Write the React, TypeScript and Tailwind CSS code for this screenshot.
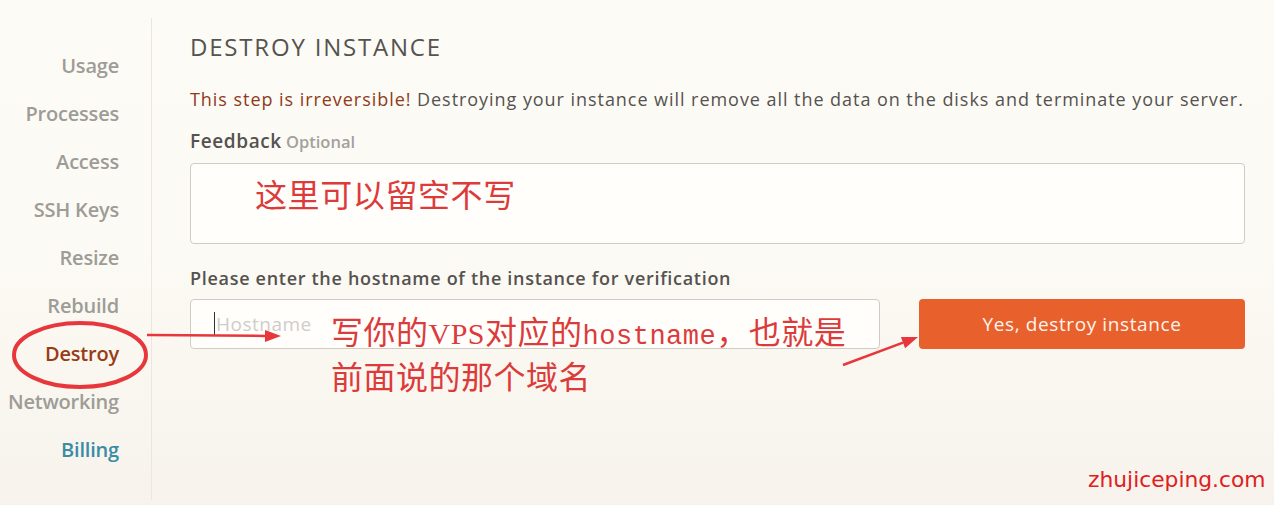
const nav = [
  { label: 'Usage', tone: 'text-[#9d9c97]' },
  { label: 'Processes', tone: 'text-[#9d9c97]' },
  { label: 'Access', tone: 'text-[#9d9c97]' },
  { label: 'SSH Keys', tone: 'text-[#9d9c97]' },
  { label: 'Resize', tone: 'text-[#9d9c97]' },
  { label: 'Rebuild', tone: 'text-[#9d9c97]' },
  { label: 'Destroy', tone: 'text-[#983c16]' },
  { label: 'Networking', tone: 'text-[#9d9c97]' },
  { label: 'Billing', tone: 'text-[#3a8ba6]' },
]

const sans = "font-['Open_Sans','Liberation_Sans',sans-serif]"
const note = "font-['Liberation_Serif','Noto_Sans_CJK_SC',serif] text-[#dc3b3b]"

function Arrow({ x1, y1, x2, y2 }: { x1: number; y1: number; x2: number; y2: number }) {
  const a = Math.atan2(y2 - y1, x2 - x1)
  const len = 16
  const w = 6
  const bx = x2 - Math.cos(a) * len
  const by = y2 - Math.sin(a) * len
  const px = -Math.sin(a) * w
  const py = Math.cos(a) * w
  return (
    <g fill="#e8373c" stroke="#e8373c">
      <line x1={x1} y1={y1} x2={bx} y2={by} strokeWidth={2.5} />
      <polygon points={`${x2},${y2} ${bx + px},${by + py} ${bx - px},${by - py}`} stroke="none" />
    </g>
  )
}

export default function App() {
  return (
    <div className={`relative h-[505px] w-[1274px] overflow-hidden bg-gradient-to-b from-[#fdfbf6] via-[#fcfaf4] to-[#f7f3ec] ${sans}`}>
      <div className="flex h-full">
        <aside className="mt-[18px] h-[482px] w-[152px] shrink-0 border-r border-[#ebe7df] pr-[32px] pt-[24px]">
          <ul className="flex flex-col items-end">
            {nav.map((item) => (
              <li key={item.label} className={`h-[48px] text-[20px] font-semibold leading-[48px] tracking-[-0.2px] ${item.tone}`}>
                {item.label}
              </li>
            ))}
          </ul>
        </aside>

        <main className="min-w-0 flex-1 pl-[38px] pr-[29px] pt-[33px]">
          <h1 className="text-[24px] font-normal uppercase leading-[28px] tracking-[1.8px] text-[#555350]">Destroy instance</h1>

          <p className="mt-[25px] whitespace-nowrap text-[18px] leading-[26px] tracking-[0.95px] text-[#55524f]">
            <span className="text-[#8e3a1b]">This step is irreversible!</span> Destroying your instance will remove all the data on the
            disks and terminate your server.
          </p>

          <div className="mt-[16px] leading-[26px]">
            <span className="text-[19px] font-semibold tracking-[0.6px] text-[#55524f]">Feedback</span>{' '}
            <span className="text-[16.5px] font-semibold text-[#a3a19c]">Optional</span>
          </div>

          <div className="mt-[8px] h-[81px] rounded-[4px] border border-[#cfccc5] bg-[#fffefb]" />

          <div className="mt-[21px] text-[18px] font-semibold leading-[26px] tracking-[0.7px] text-[#55524f]">
            Please enter the hostname of the instance for verification
          </div>

          <div className="mt-[8px] flex gap-[39px]">
            <div className="flex h-[50px] w-[690px] items-center rounded-[4px] border border-[#cfccc5] bg-[#fffefb] pl-[23px]">
              <span className="mr-[1px] h-[24px] w-px bg-[#333]" />
              <span className="text-[19px] tracking-[0.5px] text-[#cfcdca]">Hostname</span>
            </div>
            <button className="h-[50px] flex-1 rounded-[4px] bg-[#e8602c] text-[19px] tracking-[0.6px] text-[#fff4ec]">
              Yes, destroy instance
            </button>
          </div>
        </main>
      </div>

      {/* annotations */}
      <svg className="pointer-events-none absolute inset-0" width="1274" height="505">
        <ellipse cx="80" cy="355" rx="66" ry="32" fill="none" stroke="#e8373c" strokeWidth="4" />
        <Arrow x1={147} y1={335} x2={281} y2={336} />
        <Arrow x1={843} y1={365} x2={918} y2={337} />
      </svg>
      <div className={`pointer-events-none absolute left-[255px] top-[176px] text-[32px] leading-[40px] tracking-[0.6px] ${note}`}>
        这里可以留空不写
      </div>
      <div className={`pointer-events-none absolute left-[331px] top-[313px] text-[32px] leading-[41px] tracking-[0.5px] ${note}`}>
        <div>
          写你的<span className="text-[30px]">VPS</span>对应的
          <span className="font-['Liberation_Mono',monospace] text-[27px]">hostname</span>，也就是
        </div>
        <div>前面说的那个域名</div>
      </div>
      <div className="pointer-events-none absolute left-[1088px] top-[464px] font-['DejaVu_Sans','Liberation_Sans',sans-serif] text-[21.8px] leading-[32px] text-[#e02020]">
        zhujiceping.com
      </div>
    </div>
  )
}
